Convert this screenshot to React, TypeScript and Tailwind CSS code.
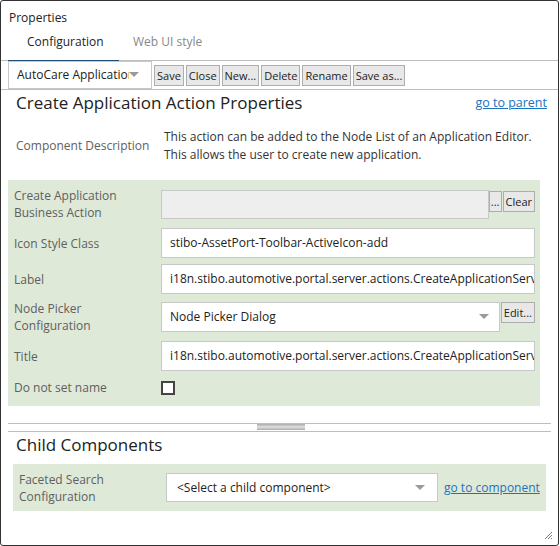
// Panel de propiedades de una acción de aplicación (editor de configuración).
import type { ReactNode } from 'react'

const font = { fontFamily: '"Segoe UI", "Open Sans", "Noto Sans", sans-serif' }

function Btn({ children, className = '' }: { children: ReactNode; className?: string }) {
  return (
    <button
      type="button"
      className={`h-[21px] border border-[#adadad] bg-[#e8e8e8] px-[2px] text-[11px] leading-none text-[#222] ${className}`}
    >
      {children}
    </button>
  )
}

function Caret() {
  return (
    <svg width="10" height="6" viewBox="0 0 10 6" aria-hidden="true">
      <path d="M0 0h10L5 5z" fill="#9a9a9a" />
    </svg>
  )
}

function Row({ label, children, className = '' }: { label: ReactNode; children: ReactNode; className?: string }) {
  return (
    <div className={`flex h-[30px] items-center ${className}`}>
      <div className="w-[153px] shrink-0 pl-[6px] text-[12px] leading-[17px] text-[#606060]">{label}</div>
      <div className="flex min-w-0 flex-1 items-start">{children}</div>
    </div>
  )
}

function TextBox({ value }: { value: string }) {
  return (
    <div className="flex h-[30px] min-w-0 flex-1 items-center overflow-hidden whitespace-nowrap border border-[#c8c8c8] bg-white px-[8px] text-[12px] text-[#222]">
      {value}
    </div>
  )
}

export default function App() {
  return (
    <div className="h-[546px] w-[560px] bg-white" style={font}>
      <div className="relative flex h-[546px] w-[559px] flex-col rounded-[3px] border border-[#333] bg-white">
        <div className="pl-[8px] pt-[9px] text-[12px] leading-[16px] text-[#222]">Properties</div>

        {/* Pestañas */}
        <div className="mt-[7px] flex border-b border-[#bdbdbd] pl-[7px] text-[12px] leading-[18px]">
          <div className="relative w-[111px] pb-[9px] pl-[19px] text-[#222]">
            Configuration
            <span className="absolute -bottom-px left-0 right-0 h-px bg-[#1f4e79]" />
          </div>
          <div className="pb-[9px] pl-[14px] text-[#888]">Web UI style</div>
        </div>

        {/* Barra de herramientas */}
        <div className="flex items-center border-b border-[#bdbdbd] pl-[7px]">
          <div className="flex h-[28px] w-[144px] items-center justify-between border border-[#c8c8c8] bg-white pl-[8px] pr-[12px] text-[12px] text-[#222]">
            <span className="w-[112px] overflow-hidden whitespace-nowrap">AutoCare Application</span>
            <Caret />
          </div>
          <div className="ml-[2px] flex gap-[2px]">
            <Btn>Save</Btn>
            <Btn>Close</Btn>
            <Btn>New...</Btn>
            <Btn>Delete</Btn>
            <Btn>Rename</Btn>
            <Btn>Save as...</Btn>
          </div>
        </div>

        <div className="flex items-start justify-between pl-[15px] pr-[11px] pt-[1px]">
          <h1 className="text-[17px] leading-[24px] text-[#222]">Create Application Action Properties</h1>
          <a className="pt-[3px] text-[12.5px] text-[#1a73c0] underline" href="#">go to parent</a>
        </div>

        <div className="mt-[13px] flex pl-[15px] pr-[20px]">
          <div className="w-[148px] shrink-0 pt-[9px] text-[12px] text-[#606060]">Component Description</div>
          <p className="text-[12px] leading-[18px] text-[#333]">
            This action can be added to the Node List of an Application Editor. This allows the user to create new application.
          </p>
        </div>

        {/* Propiedades */}
        <div className="ml-[7px] mr-[18px] mt-[16px] flex flex-col bg-[#dfe9d8] pb-[11px] pr-[5px] pt-[9px]">
          <Row label={<>Create Application<br />Business Action</>}>
            <div className="h-[29px] min-w-0 flex-1 border border-[#c8c8c8] bg-[#eeeeee]" />
            <Btn className="mt-px h-[18px] px-px">...</Btn>
            <Btn className="ml-px mt-px h-[18px]">Clear</Btn>
          </Row>
          <Row label="Icon Style Class" className="mt-[9px]">
            <TextBox value="stibo-AssetPort-Toolbar-ActiveIcon-add" />
          </Row>
          <Row label="Label" className="mt-[6px]">
            <TextBox value="i18n.stibo.automotive.portal.server.actions.CreateApplicationServ" />
          </Row>
          <Row label={<>Node Picker<br />Configuration</>} className="mt-[8px]">
            <div className="flex h-[30px] min-w-0 flex-1 items-center justify-between border border-[#c8c8c8] bg-white pl-[8px] pr-[10px] text-[12px] text-[#222]">
              Node Picker Dialog
              <Caret />
            </div>
            <Btn className="ml-px h-[20px]">Edit...</Btn>
          </Row>
          <Row label="Title" className="mt-[9px]">
            <TextBox value="i18n.stibo.automotive.portal.server.actions.CreateApplicationServ" />
          </Row>
          <div className="mt-[10px] flex h-[14px] items-center">
            <div className="w-[153px] shrink-0 pl-[6px] text-[12px] text-[#606060]">Do not set name</div>
            <span className="h-[14px] w-[14px] border-2 border-[#444] bg-white" />
          </div>
        </div>

        {/* Separador */}
        <div className="relative mx-[7px] mt-[17px] h-[9px] border-y border-[#bdbdbd]">
          <span className="absolute left-[249px] top-0 h-[6px] w-[48px] bg-[linear-gradient(#aaa,#e0e0e0_50%,#aaa)]" />
        </div>

        <h2 className="pl-[15px] pt-[1px] text-[17px] leading-[24px] text-[#222]">Child Components</h2>

        <div className="mx-[12px] mt-[7px] flex h-[47px] items-center bg-[#dfe9d8] pl-[6px]">
          <div className="w-[147px] shrink-0 text-[12px] leading-[17px] text-[#606060]">
            Faceted Search<br />Configuration
          </div>
          <div className="flex h-[29px] w-[272px] items-center justify-between border border-[#c8c8c8] bg-white pl-[10px] pr-[12px] text-[12px] text-[#222]">
            &lt;Select a child component&gt;
            <Caret />
          </div>
          <a className="ml-[6px] whitespace-nowrap text-[12px] text-[#1a73c0] underline" href="#">go to component</a>
        </div>

        <svg className="absolute bottom-[5px] right-[5px]" width="10" height="10" viewBox="0 0 10 10" aria-hidden="true">
          <path d="M9 2L2 9M9 5L5 9M9 8L8 9" stroke="#777" strokeWidth="1" />
        </svg>
      </div>
    </div>
  )
}
